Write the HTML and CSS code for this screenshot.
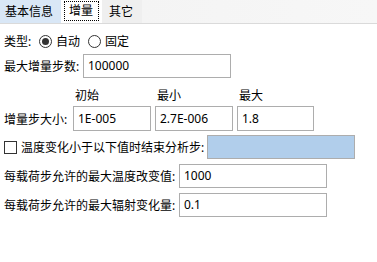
FILE: index.html
```html
<!DOCTYPE html>
<html>
<head>
<meta charset="utf-8">
<link rel="stylesheet" href="styles.css">
</head>
<body>
<div class="tabs">
  <div class="tab tab-a">基本信息</div>
  <div class="tab tab-b"><span class="focus">增量</span></div>
  <div class="tab tab-c">其它</div>
  <div class="tab-fill"></div>
</div>
<div class="content">
  <div class="row row-type">
    <span class="label lbl-type">类型:</span>
    <span class="radio checked"></span><span class="rtext">自动</span>
    <span class="radio"></span><span class="rtext">固定</span>
  </div>
  <div class="row row-max">
    <span class="label">最大增量步数:</span>
    <div class="field w148">100000</div>
  </div>
  <div class="row row-heads">
    <span class="head">初始</span>
    <span class="head">最小</span>
    <span class="head">最大</span>
  </div>
  <div class="row row-sizes">
    <span class="label lbl-size">增量步大小:</span>
    <div class="field w78">1E-005</div>
    <div class="field w78">2.7E-006</div>
    <div class="field w77">1.8</div>
  </div>
  <div class="row row-check">
    <span class="check"></span>
    <span class="label">温度变化小于以下值时结束分析步:</span>
    <div class="field blue"></div>
  </div>
  <div class="row row-temp">
    <span class="label lbl-long">每载荷步允许的最大温度改变值:</span>
    <div class="field w148">1000</div>
  </div>
  <div class="row row-rad">
    <span class="label lbl-long">每载荷步允许的最大辐射变化量:</span>
    <div class="field w148">0.1</div>
  </div>
</div>
</body>
</html>
```
FILE: styles.css
```css
html, body {
  margin: 0;
  padding: 0;
  background: #ffffff;
}
body {
  width: 377px;
  height: 262px;
  overflow: hidden;
  font-family: "Noto Sans", "Noto Sans CJK SC", sans-serif;
  font-size: 12px;
  color: #000000;
}
.tabs {
  display: flex;
  height: 23px;
  border-bottom: 1px solid #dadada;
  background: #ffffff;
}
.tab {
  box-sizing: border-box;
  height: 23px;
  display: flex;
  align-items: center;
  line-height: 1;
}
.tab-a {
  width: 61px;
  padding-left: 5px;
  background: #d9e7f6;
}
.tab-b {
  width: 37px;
  margin-left: 2px;
  padding: 1px 1px 2px 1px;
  background: #ffffff;
}
.focus {
  box-sizing: border-box;
  width: 35px;
  height: 20px;
  border: 1px dotted #000000;
  display: flex;
  align-items: center;
  padding-left: 4px;
}
.tab-c {
  width: 40px;
  margin-left: 2px;
  padding-left: 7px;
  background: #efefef;
}
.tab-fill {
  flex: 1;
  height: 23px;
  background: linear-gradient(to right, #f4f4f4, #f7f7f7);
}
.content {
  display: flex;
  flex-direction: column;
  padding-left: 4px;
}
.row {
  display: flex;
  align-items: center;
}
.label {
  white-space: nowrap;
}
.row-type {
  height: 20px;
  margin-top: 7px;
}
.lbl-type {
  width: 35px;
}
.radio {
  box-sizing: border-box;
  width: 13px;
  height: 13px;
  border: 1px solid #333333;
  border-radius: 50%;
  display: flex;
  align-items: center;
  justify-content: center;
}
.radio + .rtext + .radio {
  margin-left: 8px;
}
.radio.checked::after {
  content: "";
  width: 7px;
  height: 7px;
  border-radius: 50%;
  background: #333333;
}
.rtext {
  margin-left: 4px;
}
.field {
  box-sizing: border-box;
  height: 24px;
  border: 1px solid #adadad;
  background: #ffffff;
  padding-left: 4px;
  display: flex;
  align-items: center;
  line-height: 1;
}
.w148 { width: 148px; }
.w78 { width: 78px; margin-right: 4px; }
.w77 { width: 77px; }
.row-max {
  margin-top: 3px;
}
.row-max .label {
  width: 79px;
}
.row-heads {
  height: 16px;
  margin-top: 9px;
  padding-left: 71px;
}
.head {
  width: 82px;
}
.row-sizes {
  margin-top: 3px;
}
.row-sizes .field {
  height: 25px;
}
.lbl-size {
  width: 69px;
}
.row-check {
  margin-top: 4px;
}
.check {
  box-sizing: border-box;
  width: 13px;
  height: 13px;
  border: 1px solid #333333;
  margin-right: 4px;
}
.field.blue {
  width: 148px;
  margin-left: 3px;
  background: #b1ceeb;
}
.row-temp {
  margin-top: 5px;
}
.row-rad {
  margin-top: 5px;
}
.lbl-long {
  width: 175px;
}
```
